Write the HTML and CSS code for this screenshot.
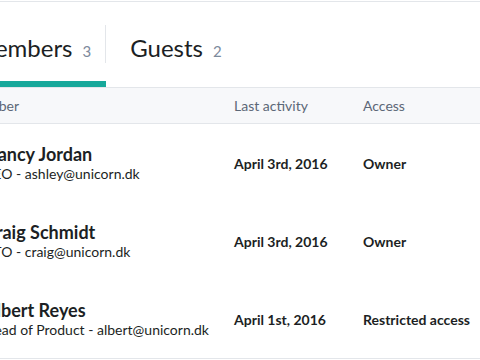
FILE: index.html
```html
<!DOCTYPE html>
<html lang="en">
  <head>
    <meta charset="UTF-8" />
    <title>Team members</title>
    <link rel="stylesheet" href="styles.css">
  </head>
  <body>
    <div class="panel">
      <nav class="tabs">
        <div class="tab active">Members <span class="count">3</span></div>
        <div class="tab">Guests <span class="count">2</span></div>
      </nav>

      <div class="table">
        <div class="row head">
          <div class="col-member">Member</div>
          <div class="col-activity">Last activity</div>
          <div class="col-access">Access</div>
        </div>
        <div class="row">
          <div class="col-member">
            <div class="name">Nancy Jordan</div>
            <div class="role">CEO - ashley@unicorn.dk</div>
          </div>
          <div class="col-activity">April 3rd, 2016</div>
          <div class="col-access">Owner</div>
        </div>
        <div class="row">
          <div class="col-member">
            <div class="name">Craig Schmidt</div>
            <div class="role">CTO - craig@unicorn.dk</div>
          </div>
          <div class="col-activity">April 3rd, 2016</div>
          <div class="col-access">Owner</div>
        </div>
        <div class="row last">
          <div class="col-member">
            <div class="name">Albert Reyes</div>
            <div class="role">Head of Product - albert@unicorn.dk</div>
          </div>
          <div class="col-activity">April 1st, 2016</div>
          <div class="col-access">Restricted access</div>
        </div>
      </div>
    </div>
  </body>
</html>
```

FILE: styles.css
```css
body {
  margin: 0;
  font-family: Lato, "Liberation Sans", sans-serif;
  color: #1c1f24;
  background: #fff;
  overflow: hidden;
}
.panel {
  border-top: 1px solid #e3e6ea;
  margin-top: 1px;
  width: 520px;
}
.tabs {
  display: flex;
  height: 85px;
  margin-left: -51px;
}
.tab {
  display: flex;
  align-items: baseline;
  height: 85px;
  padding: 31px 24px 0;
  font-size: 24px;
  box-sizing: border-box;
  position: relative;
}
.tab.active {
  padding-right: 15px;
  border-bottom: 6px solid #17a89a;
}
.tab.active::after {
  content: "";
  position: absolute;
  right: 0;
  top: 23px;
  height: 38px;
  border-right: 1px solid #e3e6ea;
}
.count {
  font-size: 15px;
  color: #7d8a9c;
  margin-left: 10px;
}
.table {
  border-top: 1px solid #e3e6ea;
}
.row {
  display: flex;
  align-items: center;
  height: 78px;
  font-size: 14px;
  font-weight: bold;
}
.row.head {
  height: 35px;
  background: #f7f8fa;
  border-bottom: 1px solid #e3e6ea;
  font-weight: normal;
  color: #5c6777;
}
.row.last {
  border-bottom: 1px solid #e3e6ea;
}
.col-member {
  width: 250px;
  margin-left: -16px;
}
.col-activity {
  width: 129px;
}
.col-access {
  flex: 1;
}
.name {
  font-size: 18px;
  line-height: 22px;
  font-weight: bold;
}
.role {
  font-size: 14px;
  line-height: 18px;
  font-weight: normal;
}
.row.head .col-member {
  margin-left: -33px;
  width: 267px;
}
```
